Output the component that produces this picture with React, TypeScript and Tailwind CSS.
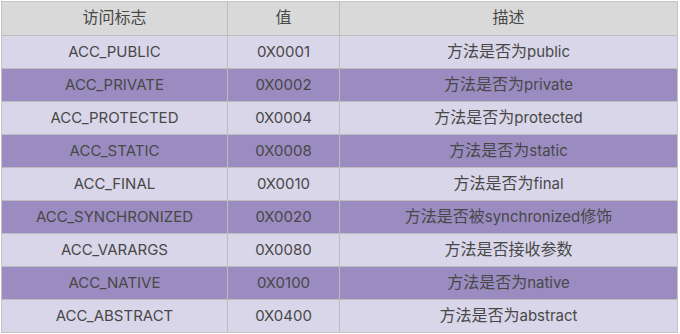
const rows = [
  ['ACC_PUBLIC', '0X0001', '方法是否为public'],
  ['ACC_PRIVATE', '0X0002', '方法是否为private'],
  ['ACC_PROTECTED', '0X0004', '方法是否为protected'],
  ['ACC_STATIC', '0X0008', '方法是否为static'],
  ['ACC_FINAL', '0X0010', '方法是否为final'],
  ['ACC_SYNCHRONIZED', '0X0020', '方法是否被synchronized修饰'],
  ['ACC_VARARGS', '0X0080', '方法是否接收参数'],
  ['ACC_NATIVE', '0X0100', '方法是否为native'],
  ['ACC_ABSTRACT', '0X0400', '方法是否为abstract'],
];

// CJK glyphs sit a touch larger than the latin text in the original
function Mixed({ text }: { text: string }) {
  const parts = text.match(/[\u4e00-\u9fff]+|[^\u4e00-\u9fff]+/g) ?? [];
  return (
    <span className="-translate-y-px leading-[18px]">
      {parts.map((p, i) =>
        /[\u4e00-\u9fff]/.test(p) ? (
          <span key={i} className="text-[16px] leading-[18px]">{p}</span>
        ) : (
          <span key={i}>{p}</span>
        ),
      )}
    </span>
  );
}

export default function App() {
  return (
    <div
      className="h-[334px] w-[680px] bg-white pl-[1px] pt-[1px] text-[15px] text-[#484848]"
      style={{ fontFamily: 'Inter, "Noto Sans CJK SC", sans-serif' }}
    >
      <div className="w-[677px] border border-[#c4c4c4]">
        <div className="grid h-[33px] grid-cols-[226px_112px_1fr] bg-[#d9d9d9]">
          <div className="flex items-center justify-center border-r border-[#bdbdbd]"><Mixed text="访问标志" /></div>
          <div className="flex items-center justify-center border-r border-[#bdbdbd]"><Mixed text="值" /></div>
          <div className="flex items-center justify-center"><Mixed text="描述" /></div>
        </div>
        {rows.map((r, i) => (
          <div
            key={r[0]}
            className={`grid h-[33px] grid-cols-[226px_112px_1fr] border-t border-[#bdbdbd] ${
              i % 2 === 0 ? 'bg-[#d9d6e9]' : 'bg-[#9a8cc0]'
            }`}
          >
            <div className="flex items-center justify-center border-r border-[#bdbdbd]">{r[0]}</div>
            <div className="flex items-center justify-center border-r border-[#bdbdbd]">{r[1]}</div>
            <div className="flex items-center justify-center"><Mixed text={r[2]} /></div>
          </div>
        ))}
      </div>
    </div>
  );
}
